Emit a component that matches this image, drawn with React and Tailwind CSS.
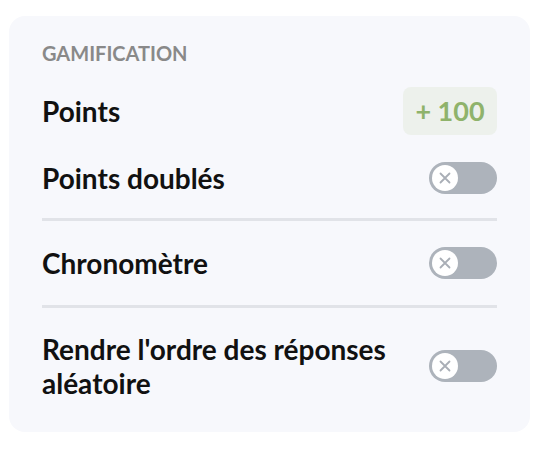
import React from "react";

function Toggle() {
  return (
    <div className="w-[68px] h-[32px] rounded-full bg-[#adb3bb] flex items-center px-[3px] shrink-0">
      <div className="w-[26px] h-[26px] rounded-full bg-white flex items-center justify-center">
        <svg width="12" height="12" viewBox="0 0 12 12">
          <path d="M1.5 1.5 L10.5 10.5 M10.5 1.5 L1.5 10.5" stroke="#a9aeb6" strokeWidth="1.8" strokeLinecap="round" />
        </svg>
      </div>
    </div>
  );
}

export default function App() {
  return (
    <div className="w-[542px] h-[464px] bg-white pt-4 pl-[9px]" style={{ fontFamily: "Lato, 'Noto Sans', sans-serif" }}>
      <div className="w-[521px] h-[416px] rounded-2xl bg-[#f7f8fc] px-[33px] pt-[25px] flex flex-col">
        <div className="text-[20px] leading-[24px] font-bold text-[#898989]">GAMIFICATION</div>
        <div className="mt-[22px] flex items-center justify-between h-[48px]">
          <span className="text-[28px] leading-[34px] font-bold text-[#111]">Points</span>
          <div className="h-[48px] w-[94px] rounded-lg bg-[#edf1ec] flex items-center justify-center text-[27px] font-bold text-[#8fb36b]">+ 100</div>
        </div>
        <div className="mt-[26px] flex items-center justify-between">
          <span className="text-[28px] leading-[34px] font-bold text-[#111]">Points doublés</span>
          <Toggle />
        </div>
        <div className="mt-[23px] h-[3px] bg-[#e1e3e8]" />
        <div className="mt-[25px] flex items-center justify-between">
          <span className="text-[28px] leading-[34px] font-bold text-[#111]">Chronomètre</span>
          <Toggle />
        </div>
        <div className="mt-[25px] h-[3px] bg-[#e1e3e8]" />
        <div className="mt-[24px] flex items-center justify-between">
          <span className="text-[28px] leading-[34px] font-bold text-[#111] w-[370px]">Rendre l'ordre des réponses aléatoire</span>
          <Toggle />
        </div>
      </div>
    </div>
  );
}
